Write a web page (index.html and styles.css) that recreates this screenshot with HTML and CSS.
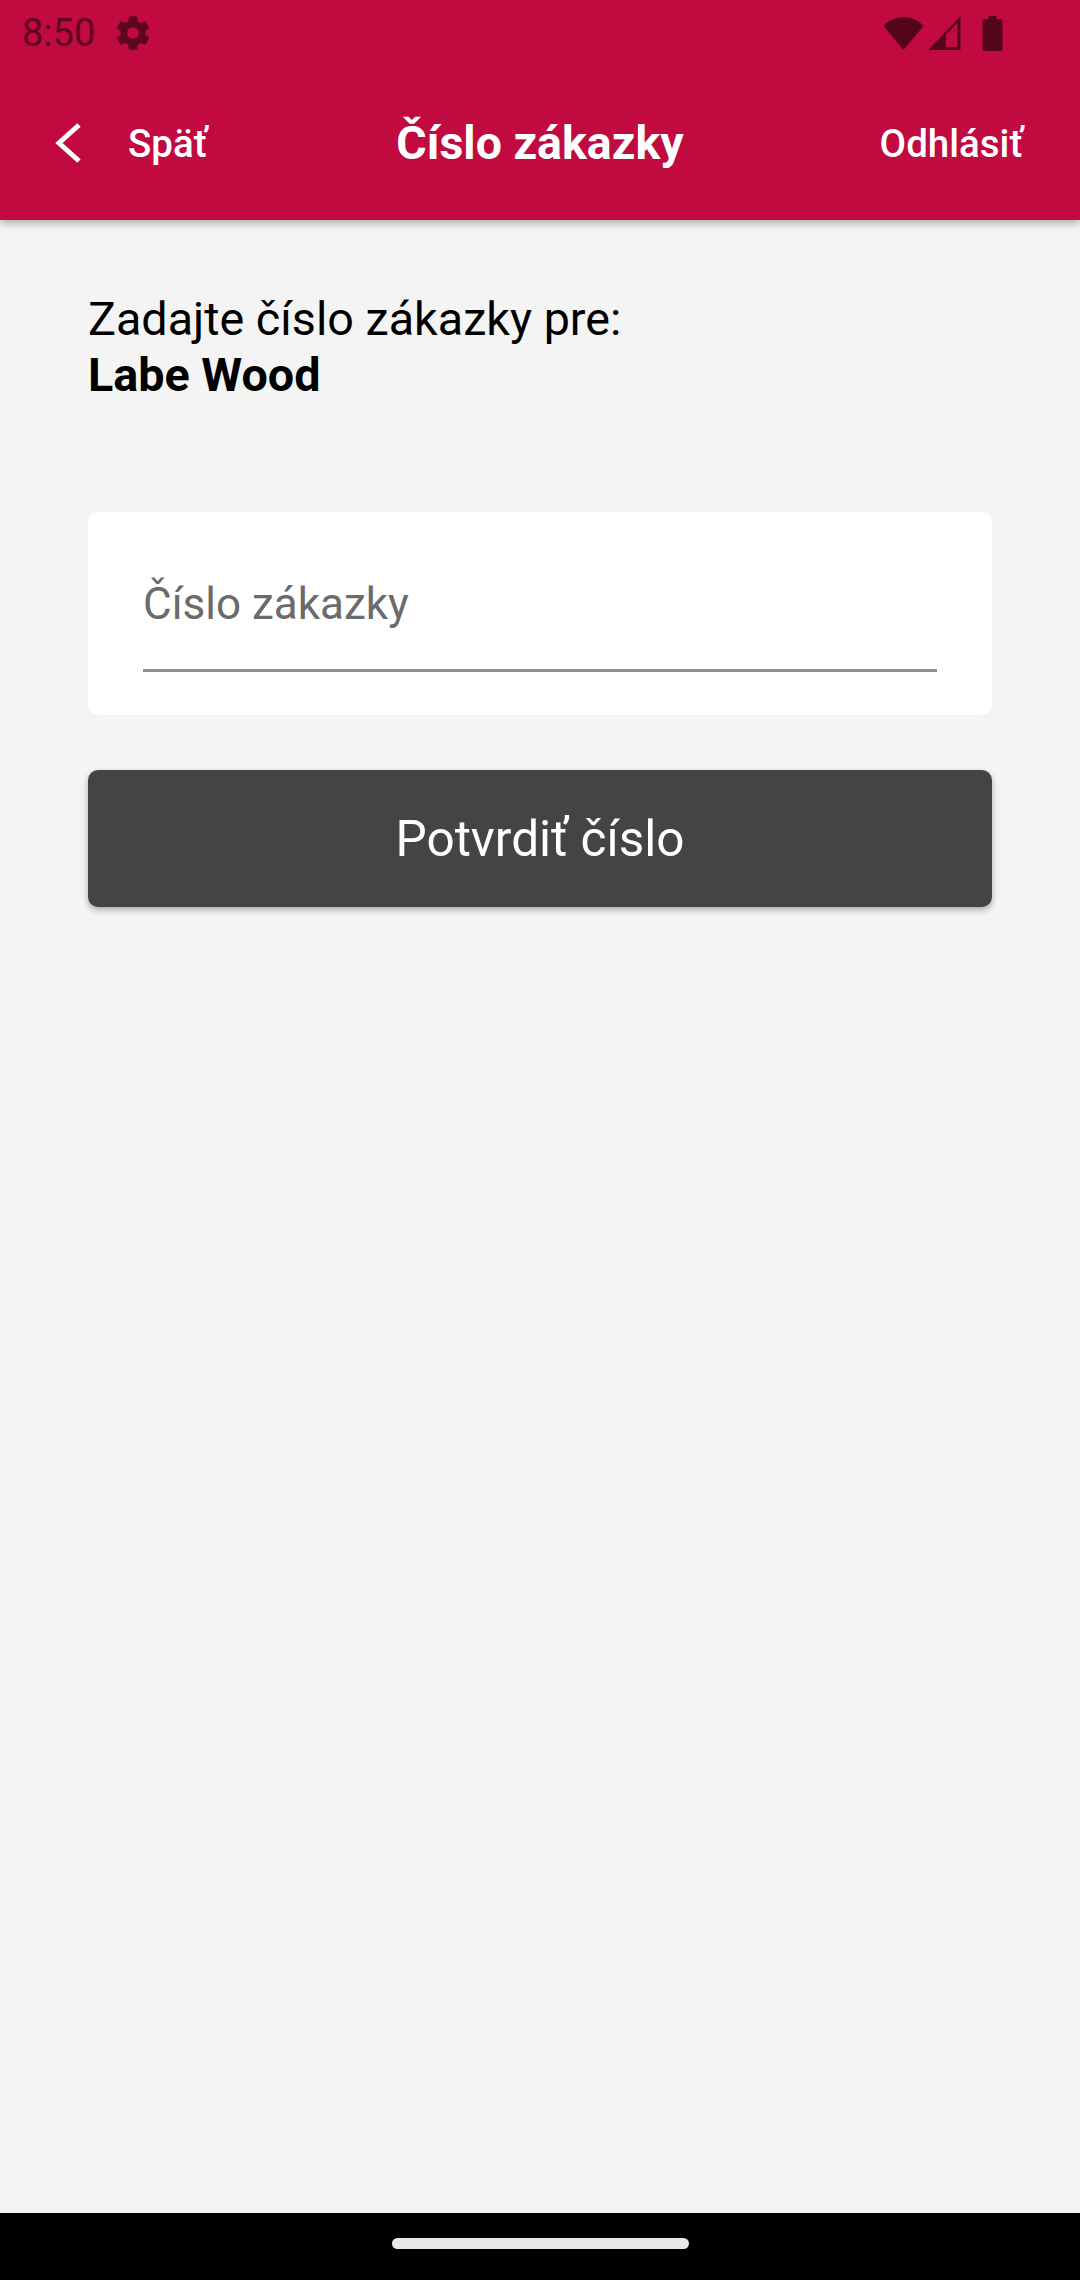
FILE: index.html
```html
<!DOCTYPE html>
<html lang="sk">
<head>
    <meta charset="UTF-8">
    <meta name="viewport" content="width=device-width, initial-scale=1.0">
    <title>Číslo zákazky</title>
    <link rel="stylesheet" href="styles.css">
</head>
<body>

    <header class="header">
        <div class="status-bar">
            <span class="status-time">8:50</span>
            <svg class="icon-gear" viewBox="0 0 24 24"><path d="M19.4 13c.04-.32.1-.66.1-1s-.06-.68-.1-1l2.1-1.65c.2-.15.25-.42.12-.64l-2-3.46c-.12-.22-.39-.3-.61-.22l-2.49 1c-.52-.4-1.08-.73-1.69-.98l-.38-2.65A.49.49 0 0 0 14 2h-4c-.25 0-.46.18-.49.42l-.38 2.65c-.61.25-1.17.59-1.69.98l-2.49-1a.5.5 0 0 0-.61.22l-2 3.46c-.13.22-.07.49.12.64L4.57 11c-.04.32-.07.66-.07 1s.03.68.07 1l-2.11 1.65c-.19.15-.25.42-.12.64l2 3.46c.12.22.39.3.61.22l2.49-1c.52.4 1.08.73 1.69.98l.38 2.65c.03.24.24.42.49.42h4c.25 0 .46-.18.49-.42l.38-2.65c.61-.25 1.17-.59 1.69-.98l2.49 1c.22.08.49 0 .61-.22l2-3.46c.13-.22.07-.49-.12-.64L19.4 13zM12 15.5a3.5 3.5 0 1 1 0-7 3.5 3.5 0 0 1 0 7z"/></svg>
            <div class="status-icons">
                <svg class="icon-wifi" viewBox="0 0 40 33"><path d="M20 33 0 9C5 3.500 12 0 20 0s15 3.500 20 9z"/></svg>
                <svg class="icon-signal" viewBox="0 0 32 34"><path fill-rule="evenodd" d="M32 0v34H0zM29 7 17 19v12h12z"/><path d="M17 19 3 33h14z"/></svg>
                <svg class="icon-battery" viewBox="0 0 20 35"><path d="M6 0h8v3h4a2 2 0 0 1 2 2v28a2 2 0 0 1-2 2H2a2 2 0 0 1-2-2V5a2 2 0 0 1 2-2h4z"/></svg>
            </div>
        </div>
        <div class="toolbar">
            <div class="toolbar-left">
                <svg class="icon-back" viewBox="0 0 27 42"><path d="M25 3 5 21l20 18"/></svg>
                <span class="toolbar-link">Späť</span>
            </div>
            <h1 class="toolbar-title">Číslo zákazky</h1>
            <div class="toolbar-right">
                <span class="toolbar-link">Odhlásiť</span>
            </div>
        </div>
    </header>

    <main class="content">
        <p class="intro">Zadajte číslo zákazky pre:<br><strong>Labe Wood</strong></p>

        <div class="input-card">
            <div class="input-field">Číslo zákazky</div>
        </div>

        <button class="confirm-btn">Potvrdiť číslo</button>
    </main>

    <footer class="nav-bar">
        <div class="home-pill"></div>
    </footer>

</body>
</html>
```

FILE: styles.css
```css
body {
    font-family: Roboto, sans-serif;
    background-color: #f4f4f4;
    margin: 0;
    height: 2280px;
    display: flex;
    flex-direction: column;
    overflow: hidden;
}
.header {
    background-color: #c00a40;
    height: 220px;
    box-shadow: 0 3px 8px rgba(0, 0, 0, 0.3);
    flex-shrink: 0;
}
.status-bar {
    height: 66px;
    display: flex;
    align-items: center;
    padding-left: 22px;
    color: #5e0520;
}
.status-time {
    font-size: 38px;
    width: 91px;
}
.icon-gear {
    width: 40px;
    height: 40px;
    fill: #5e0520;
}
.status-icons {
    margin-left: auto;
    margin-right: 77px;
    display: flex;
    align-items: center;
}
.status-icons svg {
    fill: #54041b;
}
.icon-wifi {
    width: 41px;
    height: 33px;
    margin-right: 4px;
}
.icon-signal {
    width: 33px;
    height: 34px;
    margin-right: 21px;
}
.icon-battery {
    width: 21px;
    height: 35px;
}
.toolbar {
    height: 154px;
    display: grid;
    grid-template-columns: 1fr auto 1fr;
    align-items: center;
    color: #fff;
    box-sizing: border-box;
}
.toolbar-left {
    display: flex;
    align-items: center;
    padding-left: 54px;
}
.icon-back {
    width: 27px;
    height: 42px;
    fill: none;
    stroke: #fff;
    stroke-width: 5;
    margin-right: 47px;
}
.toolbar-link {
    font-size: 38.5px;
    font-weight: 500;
}
.toolbar-title {
    font-size: 46.5px;
    font-weight: 700;
    margin: 0;
}
.toolbar-right {
    text-align: right;
    padding-right: 57px;
}
.content {
    flex: 1;
    padding: 0 88px;
}
.intro {
    font-size: 46.7px;
    line-height: 56px;
    color: #000;
    margin: 71px 0 0;
}
.intro strong {
    font-weight: 700;
}
.input-card {
    background-color: #fff;
    border-radius: 10px;
    margin-top: 109px;
    height: 203px;
    padding: 0 55px;
    box-sizing: border-box;
}
.input-field {
    font-size: 44px;
    color: #6b6b6b;
    height: 157px;
    line-height: 184px;
    border-bottom: 3px solid #8e8e93;
    overflow: hidden;
}
.confirm-btn {
    display: block;
    width: 100%;
    height: 137px;
    margin-top: 55px;
    border: none;
    border-radius: 10px;
    background-color: #444;
    color: #fff;
    font-family: Roboto, sans-serif;
    font-size: 49.5px;
    box-shadow: 0 3px 6px rgba(0, 0, 0, 0.3);
}
.nav-bar {
    height: 67px;
    background-color: #000;
    display: flex;
    justify-content: center;
    align-items: center;
    flex-shrink: 0;
}
.home-pill {
    width: 297px;
    height: 11px;
    border-radius: 6px;
    background-color: #e8e8e8;
    margin-bottom: 6px;
}
```
